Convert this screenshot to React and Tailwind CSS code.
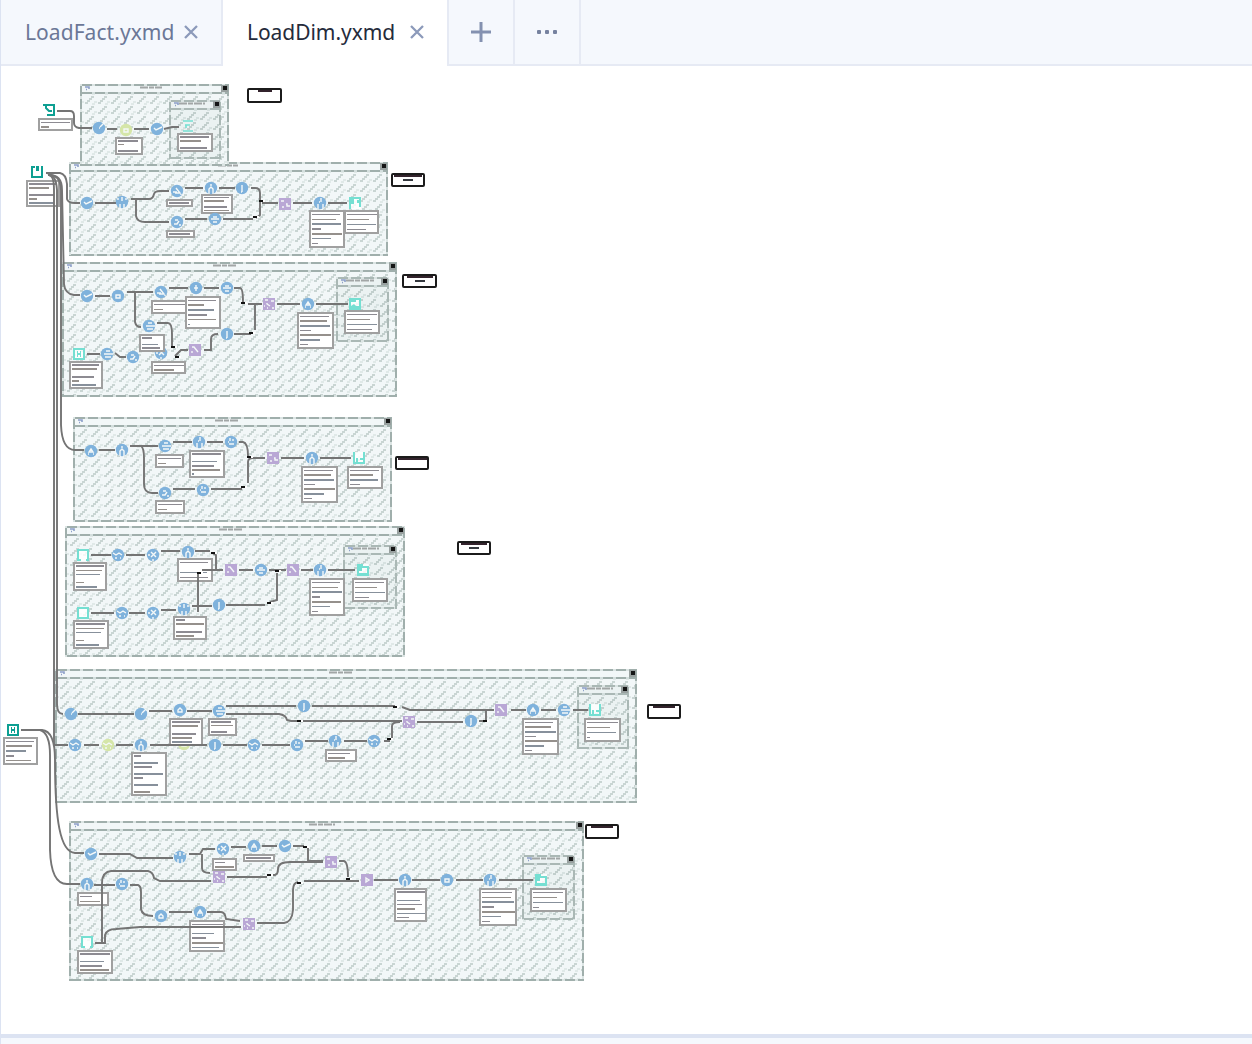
import React from 'react';

/* x, y, w, h, title x, title width */
const containers = [
  [69, 162, 319, 94, 218, 20],
  [80, 84, 149, 82, 140, 22],
  [62, 262, 335, 135, 213, 24],
  [73, 417, 319, 105, 215, 24],
  [65, 526, 340, 131, 219, 24],
  [55, 669, 582, 134, 329, 24],
  [69, 821, 515, 160, 309, 26],
];
const inner = [
  [169, 100, 52, 59, 179, 26],
  [336, 277, 53, 65, 346, 28],
  [343, 545, 54, 64, 353, 26],
  [577, 685, 52, 64, 587, 26],
  [522, 855, 53, 65, 532, 28],
];

/* note: x, y, w, h, row lengths (0 = blank row) */
const notes = [
  [38, 118, 35, 13, [29, 8]],
  [26, 180, 34, 27, [28, 20, 0, 25, 8, 25]],
  [115, 137, 28, 18, [20, 6, 0, 20]],
  [177, 133, 36, 19, [29, 21, 0, 27]],
  [166, 199, 27, 8, [20]],
  [201, 194, 32, 20, [25, 20, 0, 23, 25]],
  [166, 230, 29, 8, [21]],
  [309, 210, 36, 38, [28, 24, 29, 9, 30, 19, 6]],
  [344, 210, 35, 24, [30, 22, 29, 19]],
  [151, 300, 36, 14, [31, 9]],
  [185, 296, 36, 33, [28, 16, 26, 19, 28, 2]],
  [139, 334, 26, 18, [10, 0, 16, 18]],
  [69, 361, 34, 28, [27, 25, 0, 22, 7, 24]],
  [151, 361, 35, 13, [30, 20]],
  [297, 312, 37, 37, [29, 27, 30, 11, 31, 20, 8]],
  [344, 310, 36, 24, [30, 23, 30, 25]],
  [155, 454, 29, 14, [23, 8]],
  [189, 450, 36, 28, [29, 0, 25, 22, 28, 2]],
  [155, 500, 30, 14, [24, 9]],
  [301, 466, 37, 37, [29, 27, 30, 11, 31, 20, 8]],
  [347, 466, 36, 23, [29, 23, 28, 10]],
  [73, 562, 34, 29, [28, 26, 24, 0, 8, 21]],
  [73, 620, 36, 29, [29, 28, 25, 0, 8, 23]],
  [177, 558, 36, 24, [28, 0, 27, 28]],
  [173, 616, 34, 24, [9, 28, 0, 26, 18]],
  [309, 578, 36, 38, [28, 26, 30, 8, 29, 18, 6]],
  [352, 578, 36, 24, [29, 22, 30, 14]],
  [3, 737, 35, 28, [28, 26, 20, 8, 25]],
  [169, 718, 34, 28, [28, 26, 0, 24, 20, 20]],
  [208, 718, 29, 18, [20, 22, 0, 16]],
  [131, 752, 36, 44, [7, 0, 24, 18, 0, 29, 9, 0, 24, 0, 16]],
  [325, 749, 32, 13, [22, 17]],
  [522, 718, 37, 37, [28, 26, 31, 11, 32, 19, 7]],
  [584, 718, 37, 24, [31, 23, 29, 3]],
  [212, 858, 25, 13, [10, 19]],
  [243, 854, 32, 8, [25]],
  [77, 892, 32, 14, [12, 20]],
  [77, 950, 36, 24, [30, 0, 24, 22, 29]],
  [189, 920, 36, 32, [31, 0, 22, 14, 31, 27]],
  [394, 888, 33, 34, [28, 0, 23, 25, 18, 28, 12]],
  [479, 888, 38, 38, [30, 29, 32, 12, 34, 19, 8]],
  [530, 888, 37, 24, [30, 24, 30, 6]],
];

const bannerNotes = [
  [247, 88, 35, 15, 14, 0],
  [391, 173, 34, 14, 28, 10],
  [402, 274, 35, 14, 26, 10],
  [395, 456, 34, 14, 29, 0],
  [457, 541, 34, 14, 26, 10],
  [647, 704, 34, 15, 22, 0],
  [585, 824, 34, 15, 22, 0],
];

const TEAL = '#0d9f92';
const AQUA = '#75dfd2';
const BLUE = '#7fb2dc';
const LIME = '#d5e6a8';
const LILAC = '#b9a7d5';

/* tool: centre x, centre y, glyph, colour; the last field puts it under the notes */
const nodes = [
  [49, 110, 'save', TEAL], [37, 172, 'disk', TEAL], [13, 730, 'book', TEAL],
  [99, 128, 'pie', BLUE], [126, 130, 'box', LIME], [157, 129, 'check', BLUE], [188, 126, 'lines', AQUA],
  [87, 203, 'check', BLUE], [122, 202, 'people', BLUE], [177, 191, 'peak', BLUE], [211, 188, 'arch', BLUE], [242, 188, 'bar', BLUE],
  [177, 222, 'swirl', BLUE], [215, 219, 'rows', BLUE], [285, 204, 'join', LILAC], [320, 203, 'twin', BLUE], [355, 203, 'flag', AQUA],
  [87, 296, 'check', BLUE], [118, 296, 'box', BLUE], [161, 292, 'peak', BLUE], [196, 288, 'plus', BLUE], [227, 288, 'rows', BLUE],
  [149, 326, 'e', BLUE], [161, 353, 'cross', BLUE, true], [133, 357, 'swirl', BLUE], [107, 354, 'e', BLUE], [79, 354, 'book', AQUA],
  [195, 350, 'diag', LILAC], [227, 334, 'bar', BLUE], [269, 304, 'split', LILAC], [308, 304, 'tri', BLUE], [355, 304, 'image', AQUA],
  [91, 451, 'tri', BLUE], [122, 450, 'arch', BLUE], [165, 446, 'e', BLUE], [199, 442, 'twin', BLUE], [231, 442, 'h', BLUE],
  [165, 493, 'swirl', BLUE], [203, 490, 'h', BLUE], [273, 458, 'join', LILAC], [312, 458, 'arch', BLUE], [359, 458, 'el', AQUA],
  [83, 555, 'open', AQUA], [118, 555, 'wave', BLUE], [153, 555, 'cross', BLUE], [188, 552, 'arch', BLUE],
  [83, 613, 'frame', AQUA], [122, 613, 'wave', BLUE], [153, 613, 'cross', BLUE], [184, 609, 'people', BLUE], [219, 605, 'bar', BLUE],
  [231, 570, 'diag', LILAC], [261, 570, 'rows', BLUE], [293, 570, 'diag', LILAC], [320, 570, 'twin', BLUE], [363, 570, 'folder', AQUA],
  [71, 714, 'pie', BLUE], [141, 714, 'pie', BLUE], [180, 710, 'house', BLUE], [219, 711, 'e', BLUE], [304, 706, 'bar', BLUE],
  [75, 745, 'wave', BLUE], [108, 745, 'wave', LIME], [141, 745, 'arch', BLUE], [184, 744, 'box', LIME, true], [215, 745, 'bar', BLUE], [254, 745, 'wave', BLUE],
  [297, 745, 'h', BLUE], [335, 741, 'twin', BLUE], [374, 741, 'wave', BLUE], [409, 722, 'split', LILAC], [471, 721, 'bar', BLUE],
  [501, 710, 'diag', LILAC], [533, 710, 'tri', BLUE], [564, 710, 'e', BLUE], [595, 710, 'el', AQUA],
  [91, 854, 'check', BLUE], [180, 857, 'people', BLUE], [223, 849, 'cross', BLUE], [254, 846, 'tri', BLUE], [285, 846, 'check', BLUE],
  [331, 862, 'join', LILAC], [219, 877, 'split', LILAC], [87, 884, 'arch', BLUE], [122, 884, 'h', BLUE], [161, 916, 'house', BLUE],
  [200, 912, 'tri', BLUE], [249, 924, 'split', LILAC], [87, 942, 'open', AQUA], [367, 880, 'play', LILAC], [405, 880, 'arch', BLUE],
  [447, 880, 'box', BLUE], [490, 880, 'twin', BLUE], [541, 880, 'folder', AQUA],
];

/* pale strokes inside a 12x12 tool tile */
const glyphs = {
  pie: 'M7 5 L11 1 M6 6 H7',
  box: 'M4 5 H8 V8 H4 Z',
  check: 'M3 5 L5 7 L11 4',
  people: 'M2 2 V4 M6 1 V5 M10 2 V4 M4 12 V8 M8 12 V8',
  peak: 'M2 7 H6 M5 3 L9 8 H4 M10 9 V10',
  arch: 'M6 2 V4 M4 12 V7 L6 5 L8 7 V12',
  bar: 'M6 3 V10 M5 10 H6',
  swirl: 'M4 4 H7 M3 8 H6 L8 5 M8 9 H10',
  rows: 'M4 4 H8 M2 6 H10 M4 9 H8',
  twin: 'M7 1 V5 M4 12 V7 M9 7 V12 M5 5 H6',
  plus: 'M6 3 V9 M4 6 H8',
  e: 'M5 3 H9 M3 6 H12 M4 9 H10',
  cross: 'M4 3 L9 8 M9 3 L4 8 M1 6 H3 M6 10 V12',
  tri: 'M6 4 L8 7 H4 Z M3 9 H4 M8 9 H9',
  h: 'M5 2 V5 M8 3 V5 M4 8 H9 M3 6 H4',
  wave: 'M1 4 L4 6 L7 4 L10 6 M3 9 H5 M8 9 H9',
  house: 'M4 6 L6 4 L8 6 V8 H4 Z',
  join: 'M2 3 H5 M7 6 H8 V8 H11 M3 9 H5',
  split: 'M2 2 H5 M4 5 V6 L7 8 M8 3 H11 M1 8 H2 M9 10 H11 M4 10 H5',
  diag: 'M3 3 H5 L9 8 M3 7 V9',
  play: 'M5 4 L8 6 L5 8 Z',
};

function Tool({ x, y, kind, color }) {
  const frame = (d, extra) => (
    <>
      <rect width="12" height="12" fill="#fff" fillOpacity=".8" />
      <path d={d} fill="none" stroke={color} strokeWidth="2" />
      {extra && <path d={extra} fill={color} />}
    </>
  );
  let art;
  if (kind === 'save') art = frame('M0 1 H12 M4 11 H12 M11 12 V1 M3 2 V4 L6 7 H9');
  else if (kind === 'disk') art = frame('M1 0 V12 M0 11 H12 M11 12 V0 M0 1 H4', 'M5 0h3v5H5z');
  else if (kind === 'book') art = frame('M1 1 H11 V11 H1 Z', 'M4 3h1v2h2V3h1v6H7V7H5v2H4z');
  else if (kind === 'lines') art = <path d="M1 1 H11 M3 5 H8 M4 5 V8 M1 11 H11" fill="none" stroke={color} strokeWidth="1.600" />;
  else if (kind === 'flag') art = frame('M1 12 V1 H11 V10 M4 1 V5 M9 3 V6', 'M2 2h3v5H2z');
  else if (kind === 'image') art = frame('M1 1 H11 V11 H1 Z', 'M2 2h5v2H2z M2 8l3-2l2 2h4v3H2z');
  else if (kind === 'el') art = frame('M1 0 V11 H11 V0 M4 6 V11 M7 7 H10');
  else if (kind === 'open') art = frame('M1 12 V1 H11 V11 H9 M1 11 H4');
  else if (kind === 'frame') art = frame('M1 1 H11 V11 H1 Z');
  else if (kind === 'folder') art = frame('M1 11 V1 H5 V3 H11 V11 Z', 'M2 2h3v5H2z M2 9h8v2H2z');
  else
    art = (
      <>
        {color === LILAC ? <rect width="12" height="12" fill={color} /> : <circle cx="6" cy="6" r="6.200" fill={color} />}
        <path d={glyphs[kind]} fill="none" stroke="#f4f8f8" strokeWidth="1.400" />
      </>
    );
  return (
    <svg className="absolute h-3 w-3 overflow-visible" style={{ left: x - 6, top: y - 6 }} viewBox="0 0 12 12">
      {art}
    </svg>
  );
}

function Container({ box, nested }) {
  const [x, y, w, h, tx, tw] = box;
  const id = `hatch-${x}-${y}`;
  const stroke = nested ? '#c2cfcd' : '#c9d5d3';
  const companion = nested ? '#d6e1e0' : '#e0e9e8';
  return (
    <div className={nested ? 'absolute bg-[#ebf2f2]' : 'absolute bg-[#f2f7f8]'} style={{ left: x, top: y, width: w, height: h }}>
      <svg className="block h-full w-full" viewBox={`0 0 ${w} ${h}`}>
        <defs>
          <pattern id={id} width="13" height="10" patternUnits="userSpaceOnUse" x="4" y="1">
            <path d="M1 8 H4 M3 6 H6 M5 4 H8 M7 2 H10" stroke={stroke} strokeWidth="2" />
            <path d="M8 9 H11 M10 7 H13" stroke={companion} strokeWidth="2" />
          </pattern>
        </defs>
        <rect x="1" y="9" width={w - 2} height={h - 10} fill={`url(#${id})`} />
        <g fill="none" stroke={nested ? '#aab8b5' : '#a0afac'} strokeWidth="2">
          <rect x="1" y="1" width={w - 2} height={h - 2} stroke="#dbe4e3" />
          <path d={`M2 9 H${w - 2}`} stroke="#d3dedd" />
          <path d={`M2 1 H${w} M2 9 H${w} M2 ${h - 1} H${w}`} strokeDasharray="10 3" />
          <path d={`M1 2 V${h} M${w - 1} 2 V${h}`} strokeDasharray="10 3" />
        </g>
        <path d="M5 3 H9 V5 M6 5.500 H7" stroke="#8d9fc9" strokeWidth="1.600" fill="none" />
        <path d={`M${tx - x} 3.500 h${tw}`} stroke="#a2a6a6" strokeWidth="1.800" strokeDasharray="8 1 5 1" />
        <rect x={w - 8} y="1" width="7" height="7" fill="#98a09f" />
        <rect x={w - 6} y="2" width="4" height="4" fill="#151515" />
      </svg>
    </div>
  );
}

const rowTints = ['bg-[#8d8b92]', 'bg-[#95908c]', 'bg-[#87909b]'];

function Note({ data }) {
  const [x, y, w, h, rows] = data;
  return (
    <div
      className="absolute flex flex-col justify-around overflow-hidden border-2 border-[#a0a0a0] bg-white"
      style={{ left: x, top: y, width: w, height: h }}
    >
      {rows.map((len, i) =>
        len ? (
          <div key={i} className={`h-[1.5px] shrink-0 ${rowTints[i % 3]}`} style={{ width: len, marginLeft: 1 }} />
        ) : (
          <div key={i} className="h-px shrink-0" />
        ),
      )}
    </div>
  );
}

function Banner({ data }) {
  const [x, y, w, h, a, b] = data;
  return (
    <div
      className="absolute flex flex-col items-center gap-0.5 rounded-[2px] border-2 border-[#1b1b1b] bg-white"
      style={{ left: x, top: y, width: w, height: h }}
    >
      <div className="h-0.5 shrink-0 bg-[#33232c]" style={{ width: a }} />
      <div className="h-0.5 shrink-0 bg-[#34383e]" style={{ width: b }} />
    </div>
  );
}

const wires = [
  'M57 111 H70 Q74 111 74 116 V123 Q74 127 79 128 H92',
  'M107 129 H117 M134 129 H149 M164 129 L172 127 H179',
  'M46 173 H60 Q66 174 67 184 V199 Q68 203 75 203 H80',
  'M95 203 H116 M131 199 H149 Q153 199 154 194 Q155 191 160 191 H169 M136 200 V216 Q137 222 145 222 H169',
  'M185 188 H203 M219 188 H235 M251 188 H255 Q260 188 260 193 V215 L256 218 M185 219 H207 M223 219 H253 M262 203 H278 M293 203 H312 M328 203 H347',
  'M48 175 Q62 174 62 190 L64 284 Q65 294 74 295 H80 M95 296 H110 M127 292 H153 M135 293 V322 Q136 327 141 327 M169 288 H188 M204 288 H219 M234 288 H240 Q243 288 243 302',
  'M157 323 H168 Q172 323 172 334 V346 M87 354 H100 M115 353 L120 357 H126 M175 356 L181 350 H188 M204 350 H211 V339 Q211 334 218 334 M234 334 H251 M255 330 V304 H262 M248 304 H262 M277 304 H300 M316 304 H348',
  'M48 175 Q60 174 61 190 V425 Q62 450 75 450 H84 M99 450 H115 M130 446 H158 M141 446 Q144 448 144 458 V484 Q144 493 152 493 H158 M173 442 H192 M207 442 H223 M239 442 H243 Q248 443 248 456 M173 489 H195 M211 489 H242 M248 483 V462 Q248 458 253 458 H265 M281 458 H304 M320 458 H351',
  'M91 555 H111 M126 555 H145 M161 551 H180 M195 551 H210 M212 553 L216 555 V570 M198 572 V612 M202 570 H223 M239 570 H253 M269 570 H286 M301 570 H313 M328 570 H355',
  'M91 613 H114 M129 613 H145 M161 610 H176 M192 606 H212 M226 605 H265 M270 602 L277 600 V573',
  'M48 175 Q56 174 57 190 V704 Q57 714 63 714 M78 714 H134 M149 711 H172 M187 711 H212 M226 706 H296 M312 706 H395 M402 707 L410 710 H494 M226 714 H279 Q286 715 287 720 L291 721 H402 M417 722 H463 M479 721 H484 M486 721 V711',
  'M53 745 H68 M84 745 H99 M116 745 H133 M150 745 H207 M223 745 H247 M262 745 H290 M305 741 H328 M344 741 H367 M384 741 H390 M392 738 V726 Q392 722 400 722 M511 710 H526 M541 710 H556 M573 710 H588',
  'M21 730 H42 Q55 731 55 760 C55 820 60 852 75 853 H84',
  'M21 730 H40 Q50 733 50 755 V850 Q51 884 67 884 H80',
  'M48 175 Q54 174 54 190 V745',
  'M99 854 H130 L137 858 H173 M189 854 H200 L203 849 H215 M202 854 V868 Q202 873 210 873 M231 847 H246 M262 846 H277 M293 846 H304 M308 848 V861 H323 M339 861 H344 Q348 862 348 877',
  'M227 877 H267 M270 875 H275 Q278 874 278 869 Q278 862 290 862 H323',
  'M94 885 H115 M130 885 H138 Q141 886 141 892 V909 Q142 916 153 916 M169 912 H192 M207 912 H221 Q225 912 226 919 L240 921 M257 923 H284 Q292 922 293 910 V890 Q293 883 298 882 M304 881 H359',
  'M95 943 H102 V883 Q102 872 111 871 H148 Q153 872 154 878 L160 881 H211',
  'M95 943 H105 V935 Q107 929 116 929 L140 927 H241',
  'M374 880 H398 M412 880 H440 M456 880 H483 M499 880 H533',
];

/* numbered anchors at a joining tool's inputs */
const anchors = [
  [261, 201], [255, 217], [243, 303], [251, 333], [173, 347], [177, 357], [249, 457], [243, 487],
  [213, 553], [199, 573], [277, 571], [269, 603], [395, 707], [299, 721], [389, 739], [485, 721],
  [305, 847], [269, 875], [299, 883], [348, 879],
];

function TabClose() {
  return (
    <svg className="h-3.5 w-3.5 shrink-0" viewBox="0 0 14 14">
      <path d="M1 1 L13 13 M13 1 L1 13" stroke="#8c9aba" strokeWidth="2.300" />
    </svg>
  );
}

export default function App() {
  return (
    <div className="flex h-[1044px] w-[1252px] flex-col overflow-hidden border-l border-[#dce3f2] bg-white font-['Noto_Sans','Open_Sans',sans-serif]">
      <header className="flex h-[66px] shrink-0 bg-[#f5f8fd] text-[21px] leading-none">
        <div className="flex w-[222px] items-center border-r-2 border-b-2 border-[#e6eaf4] pl-6 text-[#6b7797]">
          <span className="w-[150px] whitespace-nowrap tracking-[0.06px]">LoadFact.yxmd</span>
          <span className="ml-[9px] flex"><TabClose /></span>
        </div>
        <div className="flex w-[224px] items-center bg-white pb-0.5 pl-6 text-[#252b3b]">
          <span className="w-[148px] whitespace-nowrap tracking-[-0.05px]">LoadDim.yxmd</span>
          <span className="ml-[15px] flex"><TabClose /></span>
        </div>
        <div className="flex w-[68px] items-center justify-center border-r-2 border-b-2 border-l-2 border-[#e6eaf4]">
          <svg className="h-5 w-5" viewBox="0 0 20 20">
            <path d="M0 10 H20 M10 0 V20" stroke="#8491b0" strokeWidth="3" />
          </svg>
        </div>
        <div className="flex w-[66px] items-center justify-center gap-1 border-r-2 border-b-2 border-[#e6eaf4]">
          <i className="h-1 w-1 rounded-[1px] bg-[#76829f]" />
          <i className="h-1 w-1 rounded-[1px] bg-[#76829f]" />
          <i className="h-1 w-1 rounded-[1px] bg-[#76829f]" />
        </div>
        <div className="flex-1 border-b-2 border-[#e6eaf4]" />
      </header>
      <main className="relative min-h-0 flex-1">
        <div className="absolute -top-[66px] -left-px h-[1034px] w-[1252px]">
          {containers.map((c, i) => <Container key={i} box={c} />)}
          {inner.map((c, i) => <Container key={i} box={c} nested />)}
          {nodes.filter((n) => n[4]).map(([x, y, kind, color], i) => <Tool key={i} x={x} y={y} kind={kind} color={color} />)}
          {notes.map((n, i) => <Note key={i} data={n} />)}
          <svg className="absolute inset-0 h-full w-full" viewBox="0 0 1252 1034">
            <g fill="none" stroke="#747474" strokeWidth="1.900">
              {wires.map((d, i) => <path key={i} d={d} />)}
            </g>
            {anchors.map(([x, y], i) => (
              <g key={i}>
                <rect x={x - 2} y={y - 1} width="4" height="2" fill="#111" />
                <rect x={x + 2} y={y - 1} width="2" height="2" fill="#fff" />
              </g>
            ))}
          </svg>
          {nodes.filter((n) => !n[4]).map(([x, y, kind, color], i) => <Tool key={i} x={x} y={y} kind={kind} color={color} />)}
          {bannerNotes.map((b, i) => <Banner key={i} data={b} />)}
        </div>
      </main>
      <footer className="h-[10px] shrink-0 border-t-4 border-[#dce3f2] bg-[#f5f8fd]" />
    </div>
  );
}
